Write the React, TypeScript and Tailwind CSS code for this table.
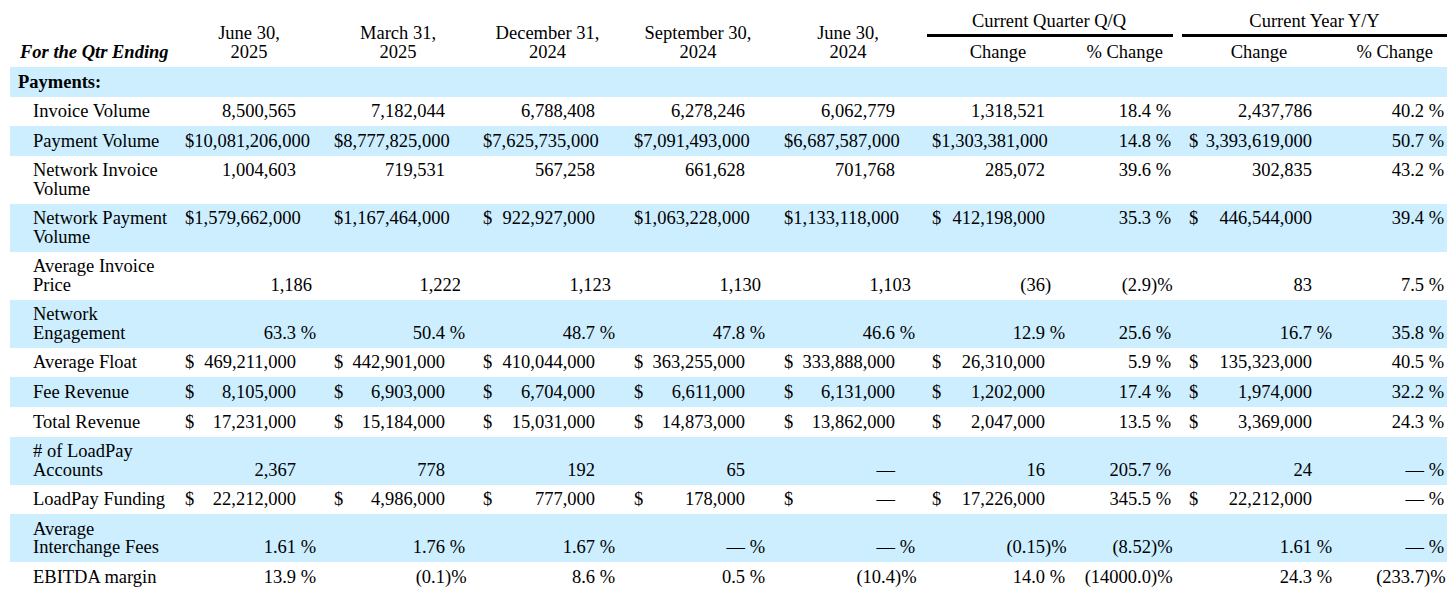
import React from "react";

type Cell = { n: string; d?: boolean; s?: string; m?: boolean; x?: boolean };

// "$ 1,000" -> dollar column, "$1,000" -> merged (left aligned), "~1,186" -> shifted right,
// trailing " %", ")%", ")" go in the hanging suffix column
function parse(raw: string): Cell {
  if (raw.startsWith("~")) return { n: raw.slice(1), x: true };
  if (/^\$\d/.test(raw)) return { n: raw, m: true };
  let d = false;
  let t = raw;
  if (t.startsWith("$ ")) {
    d = true;
    t = t.slice(2);
  }
  let s = "";
  if (t.endsWith(" %")) {
    s = "\u00a0%";
    t = t.slice(0, -2);
  } else if (t.endsWith(")%")) {
    s = ")%";
    t = t.slice(0, -2);
  } else if (t.endsWith(")")) {
    s = ")";
    t = t.slice(0, -1);
  }
  return { d, n: t, s };
}

const cols = [
  "w-[132px]",
  "ml-[17px] w-[132px]",
  "ml-[17px] w-[133px]",
  "ml-[18px] w-[132px]",
  "ml-[18px] w-[132px]",
  "ml-[16px] w-[134px]",
  "ml-[10px] w-[96px]",
  "ml-[17px] w-[144px]",
  "ml-[17px] w-[95px]",
];

type Row = {
  label: string[];
  values: string[];
  blue?: boolean;
  align?: "top" | "bottom";
};

const rows: Row[] = [
  {
    label: ["Invoice Volume"],
    values: ["8,500,565", "7,182,044", "6,788,408", "6,278,246", "6,062,779", "1,318,521", "18.4 %", "2,437,786", "40.2 %"],
  },
  {
    label: ["Payment Volume"],
    blue: true,
    values: ["$10,081,206,000", "$8,777,825,000", "$7,625,735,000", "$7,091,493,000", "$6,687,587,000", "$1,303,381,000", "14.8 %", "$ 3,393,619,000", "50.7 %"],
  },
  {
    label: ["Network Invoice", "Volume"],
    align: "top",
    values: ["1,004,603", "719,531", "567,258", "661,628", "701,768", "285,072", "39.6 %", "302,835", "43.2 %"],
  },
  {
    label: ["Network Payment", "Volume"],
    blue: true,
    align: "top",
    values: ["$1,579,662,000", "$1,167,464,000", "$ 922,927,000", "$1,063,228,000", "$1,133,118,000", "$ 412,198,000", "35.3 %", "$ 446,544,000", "39.4 %"],
  },
  {
    label: ["Average Invoice", "Price"],
    align: "bottom",
    values: ["~1,186", "~1,222", "~1,123", "~1,130", "~1,103", "(36)", "(2.9)%", "83", "7.5 %"],
  },
  {
    label: ["Network", "Engagement"],
    blue: true,
    align: "bottom",
    values: ["63.3 %", "50.4 %", "48.7 %", "47.8 %", "46.6 %", "12.9 %", "25.6 %", "16.7 %", "35.8 %"],
  },
  {
    label: ["Average Float"],
    values: ["$ 469,211,000", "$ 442,901,000", "$ 410,044,000", "$ 363,255,000", "$ 333,888,000", "$ 26,310,000", "5.9 %", "$ 135,323,000", "40.5 %"],
  },
  {
    label: ["Fee Revenue"],
    blue: true,
    values: ["$ 8,105,000", "$ 6,903,000", "$ 6,704,000", "$ 6,611,000", "$ 6,131,000", "$ 1,202,000", "17.4 %", "$ 1,974,000", "32.2 %"],
  },
  {
    label: ["Total Revenue"],
    values: ["$ 17,231,000", "$ 15,184,000", "$ 15,031,000", "$ 14,873,000", "$ 13,862,000", "$ 2,047,000", "13.5 %", "$ 3,369,000", "24.3 %"],
  },
  {
    label: ["# of LoadPay", "Accounts"],
    blue: true,
    align: "bottom",
    values: ["2,367", "778", "192", "65", "—", "16", "205.7 %", "24", "— %"],
  },
  {
    label: ["LoadPay Funding"],
    values: ["$ 22,212,000", "$ 4,986,000", "$ 777,000", "$ 178,000", "$ —", "$ 17,226,000", "345.5 %", "$ 22,212,000", "— %"],
  },
  {
    label: ["Average", "Interchange Fees"],
    blue: true,
    align: "bottom",
    values: ["1.61 %", "1.76 %", "1.67 %", "— %", "— %", "(0.15)%", "(8.52)%", "1.61 %", "— %"],
  },
  {
    label: ["EBITDA margin"],
    values: ["13.9 %", "(0.1)%", "8.6 %", "0.5 %", "(10.4)%", "14.0 %", "(14000.0)%", "24.3 %", "(233.7)%"],
  },
];

function Value({ raw, cls }: { raw: string; cls: string }) {
  const c = parse(raw);
  if (c.m) return <div className={`${cls} shrink-0 whitespace-nowrap`}>{c.n}</div>;
  if (c.x) return <div className={`${cls} shrink-0 whitespace-nowrap pr-[5px] text-right`}>{c.n}</div>;
  return (
    <div className={`${cls} flex shrink-0 whitespace-nowrap`}>
      {c.d && <span>$</span>}
      <span className="flex-1 text-right">{c.n}</span>
      <span className="w-[21px] shrink-0">{c.s}</span>
    </div>
  );
}

function DataRow({ row }: { row: Row }) {
  return (
    <div
      className={`flex py-[5.6px] ${row.align === "bottom" ? "items-end" : "items-start"} ${
        row.blue ? "bg-[#cceeff]" : "bg-white"
      }`}
    >
      <div className="w-[175px] shrink-0 whitespace-nowrap pl-[23px]">
        {row.label.map((l, i) => (
          <div key={i}>{l}</div>
        ))}
      </div>
      {row.values.map((v, i) => (
        <Value key={i} raw={v} cls={cols[i]} />
      ))}
    </div>
  );
}

const dates = [
  ["June 30,", "2025"],
  ["March 31,", "2025"],
  ["December 31,", "2024"],
  ["September 30,", "2024"],
  ["June 30,", "2024"],
];

export default function App() {
  return (
    <div className="min-h-[602px] bg-white font-['Liberation_Serif','Times_New_Roman',serif] text-[18.5px] leading-[18.4px] text-black">
      <div className="ml-[10px] w-[1437px]">
        {/* Header */}
        <div className="flex h-[67px] items-end pb-[6px]">
          <div className="w-[175px] shrink-0 whitespace-nowrap pl-[10px] font-bold italic">For the Qtr Ending</div>
          {dates.map((d, i) => (
            <div key={i} className={`${cols[i]} shrink-0 whitespace-nowrap pr-[4px] text-center`}>
              <div>{d[0]}</div>
              <div>{d[1]}</div>
            </div>
          ))}
          <div className="ml-[11px] w-[246px] shrink-0 whitespace-nowrap">
            <div className="pr-[2px] text-center">Current Quarter Q/Q</div>
            <div className="mt-[4px] h-[3px] bg-black" />
            <div className="mt-[5.5px] flex">
              <div className="w-[142px] text-center">Change</div>
              <div className="flex-1 pr-[10px] text-right">% Change</div>
            </div>
          </div>
          <div className="ml-[9px] w-[265px] shrink-0 whitespace-nowrap">
            <div className="text-center">Current Year Y/Y</div>
            <div className="mt-[4px] h-[3px] bg-black" />
            <div className="mt-[5.5px] flex">
              <div className="w-[154px] text-center">Change</div>
              <div className="flex-1 pr-[14px] text-right">% Change</div>
            </div>
          </div>
        </div>

        {/* Section */}
        <div className="bg-[#cceeff] py-[5.6px] pl-[8px] font-bold">Payments:</div>

        {rows.map((r, i) => (
          <DataRow key={i} row={r} />
        ))}
      </div>
    </div>
  );
}
